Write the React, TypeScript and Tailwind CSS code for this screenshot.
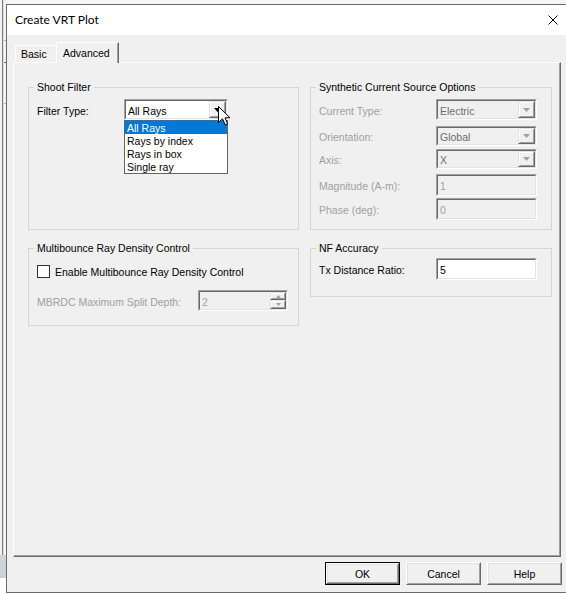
import React from "react";

const Sunken = ({
  className = "",
  inner = "",
  children,
}: {
  className?: string;
  inner?: string;
  children?: React.ReactNode;
}) => (
  <div className={`border border-t-[#a0a0a0] border-l-[#a0a0a0] border-b-white border-r-white ${className}`}>
    <div className={`h-full w-full border border-t-[#696969] border-l-[#696969] border-b-[#e3e3e3] border-r-[#e3e3e3] ${inner}`}>
      {children}
    </div>
  </div>
);

const Raised = ({ className = "", children }: { className?: string; children?: React.ReactNode }) => (
  <div className={`border border-t-[#e3e3e3] border-l-[#e3e3e3] border-b-[#696969] border-r-[#696969] bg-[#f0f0f0] ${className}`}>
    <div className="h-full w-full border border-t-white border-l-white border-b-[#a0a0a0] border-r-[#a0a0a0] flex items-center justify-center">
      {children}
    </div>
  </div>
);

const Arrow = ({ color }: { color: string }) => (
  <svg width="7" height="4" viewBox="0 0 7 4">
    <path d="M0 0H7L3.5 4Z" fill={color} />
  </svg>
);

const Combo = ({
  value,
  disabled,
  className = "",
  children,
}: {
  value: string;
  disabled?: boolean;
  className?: string;
  children?: React.ReactNode;
}) => (
  <div className={`relative ${className}`}>
    <Sunken className="h-full w-full" inner={`flex items-center ${disabled ? "bg-[#f0f0f0] text-[#6d6d6d]" : "bg-white text-black"}`}>
      <span className="flex-1 pl-[2px] pt-[3px] whitespace-nowrap overflow-hidden">{value}</span>
      <Raised className="w-[17px] h-full">
        <Arrow color={disabled ? "#a0a0a0" : "#000000"} />
      </Raised>
    </Sunken>
    {children}
  </div>
);

const TextBox = ({
  value,
  disabled,
  className = "",
}: {
  value: string;
  disabled?: boolean;
  className?: string;
}) => (
  <Sunken
    className={className}
    inner={`flex items-center pl-[2px] ${disabled ? "bg-[#f0f0f0] text-[#a0a0a0]" : "bg-white text-black"}`}
  >
    <span className="pt-[3px]">{value}</span>
  </Sunken>
);

const Group = ({
  title,
  className = "",
  children,
}: {
  title: string;
  className?: string;
  children?: React.ReactNode;
}) => (
  <div className={`relative border border-[#d5d5d5] ${className}`}>
    <span className="absolute -top-[7px] left-[5px] px-[3px] bg-[#f0f0f0] leading-[13px] whitespace-nowrap">
      {title}
    </span>
    {children}
  </div>
);

const Button = ({ label, isDefault }: { label: string; isDefault?: boolean }) => (
  <div className={`w-[75px] h-[23px] ${isDefault ? "border border-[#000000]" : ""}`}>
    <div className="h-full w-full border border-t-white border-l-white border-b-[#696969] border-r-[#696969] bg-[#f0f0f0]">
      <div className="h-full w-full border border-t-[#e3e3e3] border-l-[#e3e3e3] border-b-[#a0a0a0] border-r-[#a0a0a0] flex items-center justify-center">
        <span className="pt-[2px]">{label}</span>
      </div>
    </div>
  </div>
);

const Cursor = () => (
  <svg className="absolute left-[94px] top-[7px] z-30" width="13" height="20" viewBox="0 0 13 20">
    <path
      d="M0.5 0.5 L0.5 16.5 L4.5 12.7 L7.2 18.8 L9.6 17.8 L7 11.8 L12 11.8 Z"
      fill="#ffffff"
      stroke="#000000"
      strokeWidth="1"
      strokeLinejoin="miter"
    />
  </svg>
);

const Label = ({ w, children, className = "" }: { w: string; children: React.ReactNode; className?: string }) => (
  <span className={`${w} pt-[3px] whitespace-nowrap ${className}`}>{children}</span>
);

export default function App() {
  return (
    <div className="w-[566px] h-[594px] flex bg-white overflow-hidden font-['Liberation_Sans',Arial,sans-serif] text-[10.5px] leading-[13px] text-black">
      {/* background window strip */}
      <div className="w-[6px] flex flex-col">
        <div className="h-[555px] bg-[#f3f3f3] flex">
          <div className="w-[2px]" />
          <div className="w-[1px] bg-[#7a7a7a]" />
          <div className="w-[1px] bg-[#e0e0e0]" />
          <div className="w-[2px] flex flex-col">
            <div className="h-[40px]" />
            <div className="h-[1px] bg-[#b0b0b0]" />
            <div className="h-[21px]" />
            <div className="h-[1px] bg-[#d04040]" />
            <div className="h-[40px]" />
            <div className="h-[1px] bg-[#b0b0b0]" />
          </div>
        </div>
        <div className="h-[23px] bg-[#cdd3db]" />
        <div className="flex-1 bg-white" />
      </div>

      <div className="flex-1 flex flex-col">
        <div className="h-[4px] bg-[#f5f5f5]" />
        <div className="h-[589px] flex flex-col border-t border-l border-b border-[#6b6b6b]">
          {/* title bar */}
          <div className="h-[30px] bg-white flex items-center justify-between pl-[8px] pr-[8px]">
            <span className="font-['Lato','Noto_Sans',sans-serif] text-[12px] leading-[16px]">Create VRT Plot</span>
            <svg width="10" height="10" viewBox="0 0 10 10">
              <path d="M0.5 0.5L9.5 9.5M9.5 0.5L0.5 9.5" stroke="#000000" strokeWidth="1" />
            </svg>
          </div>

          {/* body */}
          <div className="flex-1 bg-[#f0f0f0] flex flex-col">
            {/* tabs */}
            <div className="h-[27px] flex items-end pl-[8px]">
              <div className="w-[41px] h-[17px] border-t border-l border-white flex items-center pl-[5px]">
                <span className="pt-[1px]">Basic</span>
              </div>
              <div className="relative z-10 -mb-[1px] w-[63px] h-[21px] bg-[#f0f0f0] border-t border-l border-white border-r border-r-[#696969]">
                <div className="h-full w-full border-r border-r-[#a0a0a0] flex items-center pl-[6px]">
                  Advanced
                </div>
              </div>
            </div>

            {/* panel */}
            <div className="ml-[6px] w-[548px] h-[495px] border-t border-l border-white border-r border-b border-r-[#696969] border-b-[#696969]">
              <div className="h-full w-full border-r border-b border-r-[#a0a0a0] border-b-[#a0a0a0] pl-[14px] pt-[24px] flex gap-[11px]">
                {/* left column */}
                <div className="w-[271px] flex flex-col gap-[18px]">
                  <Group title="Shoot Filter" className="h-[143px] z-20">
                    <div className="pt-[11px] pl-[8px] flex items-center">
                      <Label w="w-[87px]">Filter Type:</Label>
                      <Combo value="All Rays" className="w-[104px] h-[21px]">
                        <div className="absolute left-0 top-[21px] w-[104px] h-[54px] border border-[#646464] bg-white z-20 flex flex-col">
                          <div className="h-[13px] pt-[1px] bg-[#0078d7] text-white pl-[2px] whitespace-nowrap">All Rays</div>
                          <div className="h-[13px] pt-[1px] pl-[2px] whitespace-nowrap">Rays by index</div>
                          <div className="h-[13px] pt-[1px] pl-[2px] whitespace-nowrap">Rays in box</div>
                          <div className="h-[13px] pt-[1px] pl-[2px] whitespace-nowrap">Single ray</div>
                        </div>
                        <Cursor />
                      </Combo>
                    </div>
                  </Group>

                  <Group title="Multibounce Ray Density Control" className="h-[78px]">
                    <div className="pt-[16px] pl-[8px] flex items-center h-[29px]">
                      <div className="w-[13px] h-[13px] border border-[#333333] bg-white" />
                      <span className="ml-[5px] pt-[2px] whitespace-nowrap">Enable Multibounce Ray Density Control</span>
                    </div>
                    <div className="mt-[12px] pl-[8px] flex items-center">
                      <Label w="w-[161px]" className="text-[#a0a0a0]">MBRDC Maximum Split Depth:</Label>
                      <Sunken className="w-[90px] h-[21px]" inner="bg-[#f0f0f0] flex items-center">
                        <span className="flex-1 pl-[2px] pt-[3px] text-[#a0a0a0]">2</span>
                        <div className="w-[16px] h-full flex flex-col">
                          <Raised className="h-[8px] w-full">
                            <svg width="5" height="3" viewBox="0 0 5 3">
                              <path d="M0 3H5L2.5 0Z" fill="#a0a0a0" />
                            </svg>
                          </Raised>
                          <Raised className="h-[9px] w-full">
                            <svg width="5" height="3" viewBox="0 0 5 3">
                              <path d="M0 0H5L2.5 3Z" fill="#a0a0a0" />
                            </svg>
                          </Raised>
                        </div>
                      </Sunken>
                    </div>
                  </Group>
                </div>

                {/* right column */}
                <div className="w-[242px] flex flex-col gap-[18px]">
                  <Group title="Synthetic Current Source Options" className="h-[143px]">
                    <div className="pt-[11px] pl-[8px] flex flex-col text-[#a0a0a0]">
                      <div className="flex items-center h-[21px]">
                        <Label w="w-[117px]">Current Type:</Label>
                        <Combo value="Electric" disabled className="w-[101px] h-[21px]" />
                      </div>
                      <div className="flex items-center h-[20px] mt-[6px]">
                        <Label w="w-[117px]">Orientation:</Label>
                        <Combo value="Global" disabled className="w-[101px] h-[20px]" />
                      </div>
                      <div className="flex items-center h-[20px] mt-[3px]">
                        <Label w="w-[117px]">Axis:</Label>
                        <Combo value="X" disabled className="w-[101px] h-[20px]" />
                      </div>
                      <div className="flex items-center h-[22px] mt-[5px]">
                        <Label w="w-[117px]">Magnitude (A-m):</Label>
                        <TextBox value="1" disabled className="w-[101px] h-[22px]" />
                      </div>
                      <div className="flex items-center h-[22px] mt-[2px]">
                        <Label w="w-[117px]">Phase (deg):</Label>
                        <TextBox value="0" disabled className="w-[101px] h-[22px]" />
                      </div>
                    </div>
                  </Group>

                  <Group title="NF Accuracy" className="h-[49px]">
                    <div className="pt-[9px] pl-[8px] flex items-center">
                      <Label w="w-[117px]">Tx Distance Ratio:</Label>
                      <TextBox value="5" className="w-[101px] h-[22px]" />
                    </div>
                  </Group>
                </div>
              </div>
            </div>

            {/* buttons */}
            <div className="flex justify-end gap-[6px] pt-[5px] pr-[4px]">
              <Button label="OK" isDefault />
              <Button label="Cancel" />
              <Button label="Help" />
            </div>
          </div>
        </div>
      </div>
    </div>
  );
}
